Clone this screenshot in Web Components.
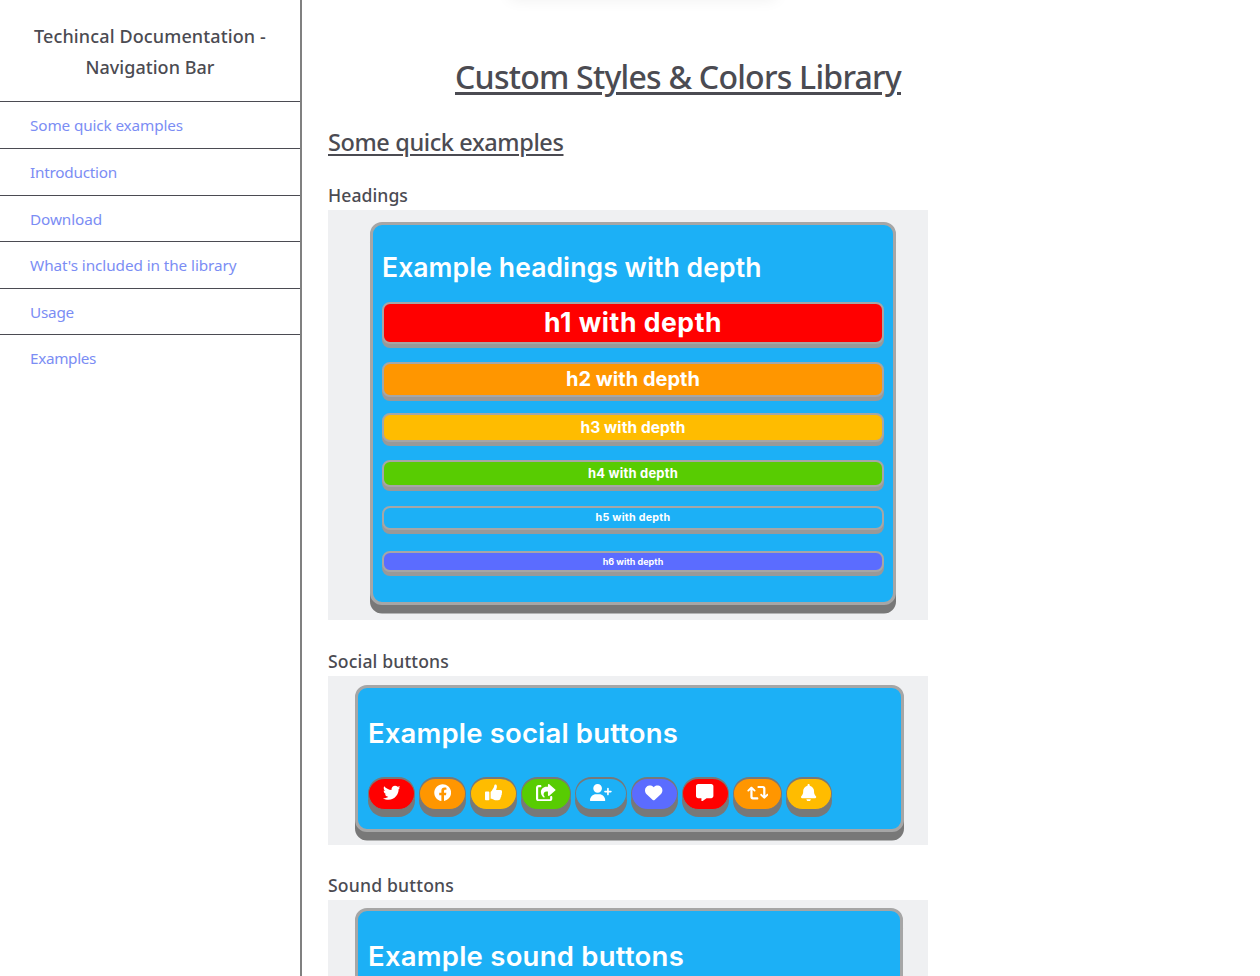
<!DOCTYPE html>
<html lang="en">
<head>
<meta charset="utf-8">
<title>Custom Styles &amp; Colors Library</title>
<style>
body{margin:0;background:#fff;color:#4b4b52;font-family:"Noto Sans","Open Sans",sans-serif;height:976px;overflow:hidden}
</style>
</head>
<body>
<docs-page>
  <docs-nav slot="nav">
    <fit-text slot="title" w="232">Techincal Documentation -</fit-text>
    <fit-text slot="title" w="129">Navigation Bar</fit-text>
    <nav-item><fit-text w="153">Some quick examples</fit-text></nav-item>
    <nav-item><fit-text w="87">Introduction</fit-text></nav-item>
    <nav-item><fit-text w="72">Download</fit-text></nav-item>
    <nav-item><fit-text w="206.5">What's included in the library</fit-text></nav-item>
    <nav-item><fit-text w="44">Usage</fit-text></nav-item>
    <nav-item><fit-text w="66">Examples</fit-text></nav-item>
  </docs-nav>
  <fit-text slot="h1" w="446">Custom Styles &amp; Colors Library</fit-text>
  <fit-text slot="h2" w="235.5">Some quick examples</fit-text>
  <example-block style="--h:410px;--gap:28px;--pad:12px 32px 0 42px">
    <fit-text slot="label" w="80">Headings</fit-text>
    <depth-card style="--ch:383px;--tp:26px;--fs:26.5px">
      <fit-text slot="title" w="379.5">Example headings with depth</fit-text>
      <depth-heading style="--c:#f00;--hh:42px;--fs:26.5px;--mt:19px;--up:2px"><fit-text w="178">h1 with depth</fit-text></depth-heading>
      <depth-heading style="--c:#ff9600;--hh:35px;--fs:20px;--mt:18px;--up:2px"><fit-text w="134">h2 with depth</fit-text></depth-heading>
      <depth-heading style="--c:#ffbc00;--hh:29px;--fs:15.5px;--mt:16px"><fit-text w="105">h3 with depth</fit-text></depth-heading>
      <depth-heading style="--c:#58cc02;--hh:27px;--fs:13px;--mt:18px"><fit-text w="90">h4 with depth</fit-text></depth-heading>
      <depth-heading style="--c:#1cb0f6;--hh:24px;--fs:10.7px;--mt:19px"><fit-text w="75">h5 with depth</fit-text></depth-heading>
      <depth-heading style="--c:#5b6cff;--hh:21px;--fs:9px;--mt:21px"><fit-text w="60.5">h6 with depth</fit-text></depth-heading>
    </depth-card>
  </example-block>
  <example-block style="--h:169px;--gap:27px;--pad:9px 24px 0 27px">
    <fit-text slot="label" w="121">Social buttons</fit-text>
    <depth-card style="--ch:147px;--tp:29px;--fs:27.5px;--in:1px">
      <fit-text slot="title" w="310">Example social buttons</fit-text>
      <social-row></social-row>
    </depth-card>
  </example-block>
  <example-block style="--h:169px;--gap:0px;--pad:8px 25px 0 27px">
    <fit-text slot="label" w="126">Sound buttons</fit-text>
    <depth-card style="--ch:147px;--tp:29px;--fs:27.5px;--in:1px">
      <fit-text slot="title" w="316">Example sound buttons</fit-text>
    </depth-card>
  </example-block>
</docs-page>
<script>
const make = (name, html, init) => customElements.define(name, class extends HTMLElement {
  constructor() {
    super();
    const t = document.createElement('template');
    t.innerHTML = html;
    this.attachShadow({mode: 'open'}).append(t.content.cloneNode(true));
  }
  connectedCallback() { if (init) init(this); }
});

make('docs-page', `<style>
:host{display:flex;height:976px;overflow:hidden;position:relative}
main{width:700px;margin-left:26px;display:flex;flex-direction:column}
h1,h2{margin:0;font-weight:500;--line:underline;flex:none}
h1{font-size:32px;line-height:48px;margin-top:53px;text-align:center;--thick:3px;--off:2.5px}
h2{font-size:23.5px;line-height:36px;margin-top:23px;margin-bottom:22px;--thick:2px;--off:2.5px}
.glow{position:absolute;left:510px;top:-20px;width:266px;height:16px;box-shadow:0 3px 16px rgba(0,0,0,.07)}
</style><slot name="nav"></slot><main><h1><slot name="h1"></slot></h1><h2><slot name="h2"></slot></h2><slot></slot></main><div class="glow"></div>`);

make('docs-nav', `<style>
:host{display:block;width:300px;height:976px;border-right:2px solid #808080;flex:none}
header{height:101.4px;box-sizing:border-box;padding-top:21px;display:flex;flex-direction:column;align-items:center;font-size:18px;font-weight:500;line-height:31px}
</style><header><slot name="title"></slot></header><slot></slot>`);

make('nav-item', `<style>
:host{display:block;height:46.6px;box-sizing:border-box;border-top:1px solid #4b4b52;padding-left:30px;font-size:15.3px;line-height:46.6px;color:#7b8df4}
</style><slot></slot>`);

make('example-block', `<style>
:host{display:block;margin-bottom:var(--gap);flex:none}
h3{margin:0;font-size:17.6px;font-weight:500;line-height:26px;height:28px}
figure{margin:0;width:600px;height:var(--h);box-sizing:border-box;background:#eff0f2;padding:var(--pad)}
</style><h3><slot name="label"></slot></h3><figure><slot></slot></figure>`);

make('depth-card', `<style>
:host{display:block;height:var(--ch);box-sizing:border-box;border:3px solid #a6a6a6;border-radius:12px;background:#1cb0f6;box-shadow:0 8.5px #787878;padding:var(--tp) 9px 0;color:#fff;font-family:Inter,"Noto Sans",sans-serif;font-weight:600}
h4{margin:0;font-size:var(--fs);font-weight:600;line-height:32px;height:32px;padding-left:var(--in,0)}
</style><h4><slot name="title"></slot></h4><slot></slot>`);

make('depth-heading', `<style>
:host{display:flex;justify-content:center;align-items:center;height:var(--hh);margin-top:var(--mt);box-sizing:border-box;border:2.5px solid #a6a6a6;border-radius:8px;background:var(--c);box-shadow:0 4px #999;font-size:var(--fs);line-height:1;padding-bottom:var(--up,0);font-weight:650}
</style><slot></slot>`);

// Spreads the letters so that the line takes the width given in "w".
make('fit-text', `<style>
:host{display:inline-block;white-space:nowrap;text-decoration-line:var(--line,none);text-decoration-thickness:var(--thick,auto);text-underline-offset:var(--off,auto)}
</style><slot></slot>`);
function fit(el) {
  el.style.letterSpacing = '0';
  const w = +el.getAttribute('w'), n = el.textContent.length;
  const natural = el.getBoundingClientRect().width;
  el.style.letterSpacing = (w - natural) / n + 'px';
}

const icons = {
  twitter: [512, 'M459.4 151.7c.3 4.500.3 9.100.3 13.600 0 138.700-105.600 298.600-298.600 298.600-59.500 0-114.700-17.200-161.100-47.100 8.400 1 16.600 1.300 25.300 1.300 49.100 0 94.200-16.600 130.300-44.800-46.100-1-84.800-31.200-98.100-72.800 6.500 1 13 1.600 19.800 1.600 9.400 0 18.800-1.300 27.600-3.600-48.100-9.700-84.100-52-84.100-103v-1.300c14 7.800 30.200 12.700 47.400 13.300-28.300-18.800-46.800-51-46.800-87.400 0-19.500 5.200-37.400 14.300-53 51.700 63.700 129.300 105.300 216.400 109.800-1.600-7.800-2.600-15.900-2.600-24 0-57.800 46.800-104.900 104.900-104.900 30.200 0 57.500 12.700 76.700 33.100 23.700-4.500 46.500-13.300 66.600-25.300-7.800 24.400-24.400 44.800-46.100 57.800 21.100-2.300 41.600-8.100 60.400-16.200-14.300 20.800-32.200 39.300-52.600 54.300z'],
  facebook: [512, 'M504 256C504 119 393 8 256 8S8 119 8 256c0 123.800 90.700 226.400 209.200 245V327.700h-63V256h63v-54.600c0-62.200 37-96.500 93.700-96.500 27.100 0 55.500 4.800 55.500 4.800v61h-31.300c-30.800 0-40.400 19.100-40.400 38.700V256h68.800l-11 71.700h-57.800V501C413.300 482.400 504 379.800 504 256z'],
  thumb: [512, 'M104 224H24c-13 0-24 11-24 24v210c0 13 11 24 24 24h80c13 0 24-11 24-24V248c0-13-11-24-24-24zM350 70c0 42-16 66-23 104h122c34 0 63 22 63 53 0 18-8 34-20 46 9 23 4 50-14 69 5 26-4 50-22 65 0 17-2 32-10 42-18 26-49 31-90 31h-23c-47 0-75-17-105-31-16-7-36-12-51-12-7 0-12-6-12-12V240c0-3 1-6 4-9 38-38 55-78 76-109 14-14 20-36 25-57C275 47 277 16 300 16c24 0 50 8 50 54z'],
  share: [576, 'M352 224H305c-45 0-81 36-81 81 0 42 26 60 31 68 7 10 1 25-13 25-4 0-8-1-12-4-24-16-86-60-86-154 0-88 72-160 160-160h48V24c0-19 23-31 39-17l176 152c12 10 12 24 0 34L391 345c-16 14-39 2-39-17v-104zM80 96c-9 0-16 7-16 16v320c0 9 7 16 16 16h320c9 0 16-7 16-16v-48c0-18 14-32 32-32s32 14 32 32v48c0 44-36 80-80 80H80c-44 0-80-36-80-80V112c0-44 36-80 80-80h48c18 0 32 14 32 32s-14 32-32 32H80z'],
  userplus: [640, 'M96 128a128 128 0 1 1 256 0 128 128 0 1 1-256 0zM0 482c0-98 80-178 178-178h92c98 0 178 80 178 178 0 17-13 30-30 30H30c-17 0-30-13-30-30zM504 312v-64h-64c-13 0-24-11-24-24s11-24 24-24h64v-64c0-13 11-24 24-24s24 11 24 24v64h64c13 0 24 11 24 24s-11 24-24 24h-64v64c0 13-11 24-24 24s-24-11-24-24z'],
  heart: [512, 'M48 300l181 169c15 14 39 14 54 0l181-169c30-28 48-68 48-110v-5c0-70-51-130-120-141-46-8-92 7-124 40l-12 12-12-12C212 51 166 36 120 44 51 55 0 115 0 185v5c0 42 18 82 48 110z'],
  message: [512, 'M64 0C29 0 0 29 0 64v288c0 35 29 64 64 64h96v80c0 13 15 20 26 12l124-92h138c35 0 64-29 64-64V64c0-35-29-64-64-64H64z'],
  retweet: [640, 'M154 89c-14-14-34-14-48 0L18 177c-10 10-10 26 0 36s26 12 38 2l42-40v209c0 44 28 72 72 72h130c20 0 34-14 34-32s-14-32-34-32H186c-14 0-22-8-22-22V175l42 40c12 10 28 8 38-2s10-26 0-36zM486 423c14 14 34 14 48 0l88-88c10-10 10-26 0-36s-26-12-38-2l-42 40V128c0-44-28-72-72-72H340c-20 0-34 14-34 32s14 32 34 32h114c14 0 22 8 22 22v195l-42-40c-12-10-28-8-38 2s-10 26 0 36z'],
  bell: [448, 'M224 0c-18 0-32 14-32 32v19C119 66 64 131 64 208v19c0 47-17 92-48 127l-8 9c-8 9-10 23-5 34s16 19 29 19h384c13 0 24-7 29-19s3-25-5-34l-8-9c-31-35-48-80-48-127v-19c0-77-55-142-128-157V32c0-18-14-32-32-32zM160 448c0 17 7 33 19 45s28 19 45 19 33-7 45-19 19-28 19-45H160z']
};
make('social-button', `<style>
:host{display:flex;justify-content:center;box-sizing:border-box;height:33px;padding-top:5px;border:solid #787878;border-width:2px 1.5px 1px;border-radius:17px;box-shadow:0 7px #787878}
svg{display:block;height:17.4px;fill:#fff}
</style><svg><path></path></svg>`, el => {
  const [w, d] = icons[el.getAttribute('icon')];
  const svg = el.shadowRoot.querySelector('svg');
  svg.setAttribute('viewBox', `0 0 ${w} 512`);
  svg.style.width = w * 17.4 / 512 + 'px';
  svg.firstChild.setAttribute('d', d);
  el.style.width = el.getAttribute('w') + 'px';
  el.style.background = el.getAttribute('c');
});
make('social-row', `<style>
:host{display:flex;gap:4px;margin:28px 0 0 1px}
</style>
<social-button icon="twitter" w="47" c="#f00"></social-button>
<social-button icon="facebook" w="47" c="#ff9600"></social-button>
<social-button icon="thumb" w="47" c="#ffbc00"></social-button>
<social-button icon="share" w="50" c="#58cc02"></social-button>
<social-button icon="userplus" w="51.5" c="#1cb0f6"></social-button>
<social-button icon="heart" w="47.2" c="#5b6cff"></social-button>
<social-button icon="message" w="47" c="#f00"></social-button>
<social-button icon="retweet" w="49.5" c="#ff9600"></social-button>
<social-button icon="bell" w="45.5" c="#ffbc00"></social-button>`);
document.querySelectorAll('fit-text').forEach(fit);
</script>
</body>
</html>
